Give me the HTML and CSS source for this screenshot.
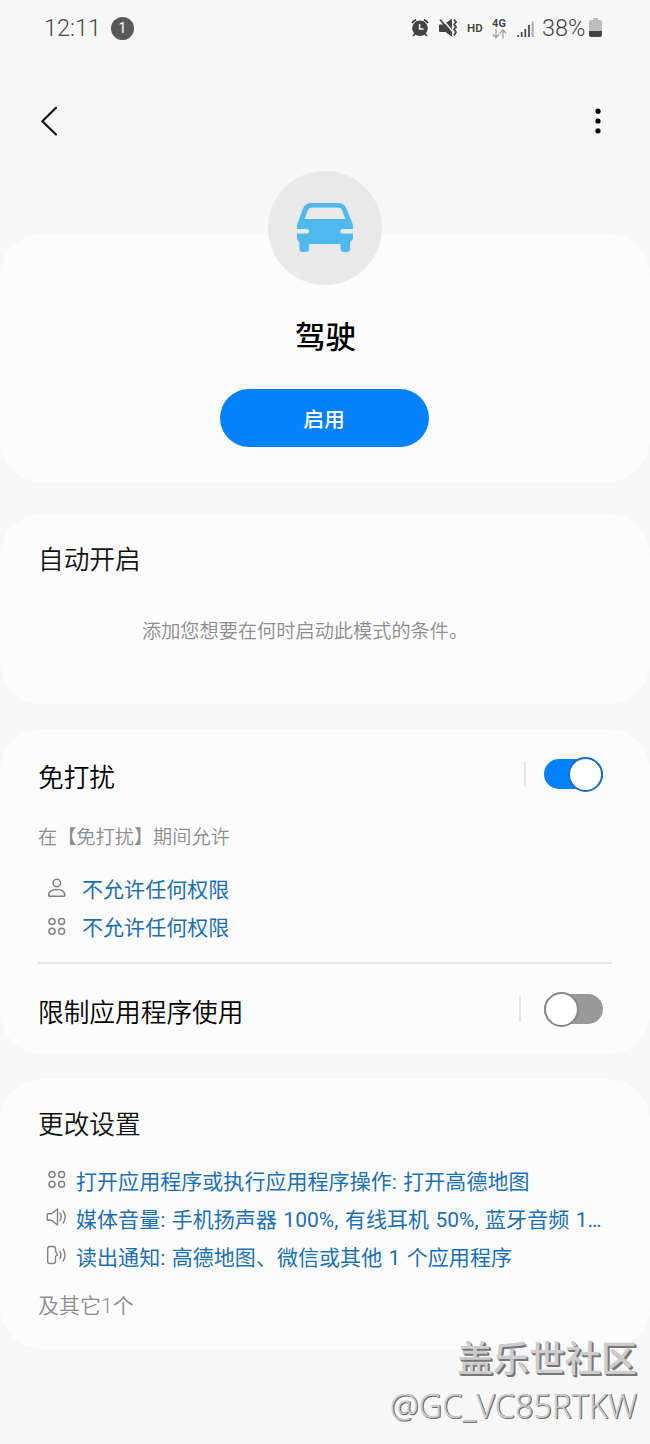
FILE: index.html
```
<!DOCTYPE html>
<html lang="zh-CN">

<head>
  <meta charset="UTF-8">
  <title>驾驶</title>
  <link rel="stylesheet" href="styles.css">
</head>

<body>
  <svg class="symbols" width="0" height="0">
    <symbol id="icon-apps" viewBox="0 0 20 20">
      <g fill="none" stroke="currentColor" stroke-width="1.5">
        <circle cx="5" cy="5.6" r="3" />
        <circle cx="14.6" cy="5.6" r="3" />
        <circle cx="5" cy="15.2" r="3" />
        <circle cx="14.6" cy="15.2" r="3" />
      </g>
    </symbol>
  </svg>

  <header class="status-bar">
    <span class="time">12:11</span>
    <span class="badge">1</span>
    <div class="status-icons">
      <svg class="alarm" width="18" height="20" viewBox="0 0 18 20">
        <circle cx="9" cy="10.2" r="7.8" fill="#444" />
        <path d="M.8 4.700 5 1.500M17.200 4.700 13 1.500M4.200 15.500 2.200 18M13.800 15.500 15.800 18" stroke="#444" stroke-width="2" fill="none" />
        <path d="M8.600 6v5h4" stroke="#f7f7f7" stroke-width="1.500" fill="none" />
      </svg>
      <svg class="mute" width="20" height="20" viewBox="0 0 20 20">
        <path d="M1.500 7h4l8-5.500v16.500L7.500 13.500h-6z" fill="#444" stroke="#444" stroke-linejoin="round" />
        <path d="M3.200 0 16 15" stroke="#f7f7f7" stroke-width="1.500" />
        <path d="M2 1.500 14 16" stroke="#444" stroke-width="1.700" />
        <path d="M16 1.500l2 2.500-2 2.500 2 2.500-2 2.500 2 2.500-2 3.500" stroke="#444" stroke-width="1.800" fill="none" />
      </svg>
      <span class="hd">HD</span>
      <div class="network">
        <span>4G</span>
        <svg width="15" height="10" viewBox="0 0 15 10">
          <path d="M4 0v8.500M.8 5.300 4 8.700l3.200-3.400M11 9.500V1M7.800 4.200 11 .8l3.200 3.400" stroke="#a2a2a2" stroke-width="1.300" fill="none" />
        </svg>
      </div>
      <svg class="signal" width="18" height="18" viewBox="0 0 18 18">
        <path d="M1.200 15v2M4.700 12v5M8.300 9v8M12 5v12" stroke="#444" stroke-width="1.700" />
        <path d="M15.600 1.500V17" stroke="#aaa" stroke-width="1.900" />
      </svg>
      <span class="percent">38%</span>
      <svg class="battery" width="13" height="20" viewBox="0 0 13 20">
        <path d="M4 0h5v2h2q2 0 2 2v9H0V4q0-2 2-2h2z" fill="#bebebe" />
        <path d="M0 13h13v4q0 2-2 2H2q-2 0-2-2z" fill="#444" />
      </svg>
    </div>
  </header>

  <nav class="toolbar">
    <svg width="20" height="32" viewBox="0 0 20 32">
      <path d="M17 2.800 3.300 16.300 17 29.500" fill="none" stroke="#111" stroke-width="2.200" stroke-linecap="round" stroke-linejoin="round" />
    </svg>
    <svg width="6" height="28" viewBox="0 0 6 28">
      <circle cx="3" cy="4.200" r="2.600" />
      <circle cx="3" cy="14" r="2.600" />
      <circle cx="3" cy="23.800" r="2.600" />
    </svg>
  </nav>

  <main>
    <section class="card mode">
      <div class="mode-icon">
        <svg width="58" height="50" viewBox="0 0 58 50">
          <path fill="#4fb8ee" fill-rule="evenodd" d="M15 0h27q6 0 8.500 5.500L57 22v4H46.500a2.300 2.300 0 0 0 0 4.600H57v4q0 3-3 5v6.400q0 3-3 3h-3.500q-3 0-3-3V41H13v5q0 3-3 3H6.500q-3 0-3-3v-6.400Q1 37 1 34.600v-4h9.800a2.300 2.300 0 0 0 0-4.600H1v-4L7 5.500Q9.500 0 15 0zM16.500 4.500Q13 4.500 12 7L8.500 16h41L46 7q-1-2.500-4.500-2.500z" />
        </svg>
      </div>
      <h1>驾驶</h1>
      <button class="enable">启用</button>
    </section>

    <section class="card auto">
      <h2>自动开启</h2>
      <p>添加您想要在何时启动此模式的条件。</p>
    </section>

    <section class="card dnd">
      <div class="switch-row">
        <h2>免打扰</h2>
        <span class="switch on"></span>
      </div>
      <p class="note">在【免打扰】期间允许</p>
      <ul class="list allowed">
        <li>
          <svg width="20" height="20" viewBox="0 0 20 20">
            <g fill="none" stroke="currentColor" stroke-width="1.500">
              <circle cx="9.800" cy="5" r="3.700" />
              <path d="M2.300 18.300q-.5 0-.5-.7c0-4 3.500-6 8-6s8 2 8 6q0 .7-.5.700z" />
            </g>
          </svg>
          <span>不允许任何权限</span>
        </li>
        <li>
          <svg width="20" height="20"><use href="#icon-apps" /></svg>
          <span>不允许任何权限</span>
        </li>
      </ul>
      <div class="switch-row limit">
        <h2>限制应用程序使用</h2>
        <span class="switch"></span>
      </div>
    </section>

    <section class="card settings">
      <h2>更改设置</h2>
      <ul class="list">
        <li>
          <svg width="20" height="20"><use href="#icon-apps" /></svg>
          <span>打开应用程序或执行应用程序操作: 打开高德地图</span>
        </li>
        <li>
          <svg width="22" height="20" viewBox="0 0 22 20">
            <path d="M2 6.800h3.500L11.500 2v16L5.500 13.300H2q-.8 0-.8-.8V7.600q0-.8.8-.8zM14 6.200q2.200 3.800 0 7.600M17.200 4q4 6 0 12" fill="none" stroke="currentColor" stroke-width="1.400" stroke-linejoin="round" stroke-linecap="round" />
          </svg>
          <span>媒体音量: 手机扬声器 100%, 有线耳机 50%, 蓝牙音频 1…</span>
        </li>
        <li>
          <svg width="22" height="20" viewBox="0 0 22 20">
            <path d="M9.500 5V3.800Q9.500 1.500 7 1.500H4Q1.700 1.500 1.700 3.800v12.400q0 2.300 2.300 2.300h3q2.500 0 2.500-2.300v-4.700l2-1.500-2-4zM14 6.500q1.800 3.500 0 7M17.200 4q3.500 6 0 12" fill="none" stroke="currentColor" stroke-width="1.400" stroke-linejoin="round" stroke-linecap="round" />
          </svg>
          <span>读出通知: 高德地图、微信或其他 1 个应用程序</span>
        </li>
      </ul>
      <p class="more">及其它1个</p>
    </section>
  </main>

  <div class="watermark">
    <div class="community">盖乐世社区</div>
    <div class="user">@GC_VC85RTKW</div>
  </div>
</body>

</html>
```
FILE: styles.css
```
*,
*::before,
*::after {
  box-sizing: border-box;
}

body {
  position: relative;
  width: 650px;
  height: 1444px;
  margin: 0;
  overflow: hidden;
  background: #f7f7f7;
  color: #111;
  font-family: Roboto, "Noto Sans CJK SC", sans-serif;
}

h1,
h2,
p,
ul {
  margin: 0;
  padding: 0;
}

.symbols {
  display: none;
}

/* Status bar */
.status-bar {
  display: flex;
  align-items: center;
  height: 56px;
  padding: 0 48px 0 44px;
  color: #444;
}

.time {
  font-size: 23.5px;
  font-weight: 350;
  width: 67px;
}

.badge {
  width: 23px;
  height: 23px;
  border-radius: 50%;
  background: #595959;
  color: #fff;
  font-size: 14px;
  line-height: 23px;
  text-align: center;
}

.status-icons {
  display: flex;
  align-items: center;
  margin-left: auto;
}

.mute {
  margin-left: 9px;
}

.hd {
  width: 17px;
  margin-left: 9px;
  font-size: 11.5px;
  font-weight: 600;
}

.network {
  display: flex;
  flex-direction: column;
  align-items: center;
  width: 16px;
  margin-left: 7px;
  font-size: 11px;
  font-weight: 700;
  line-height: 11px;
}

.signal {
  margin: 2px 0 0 10px;
}

.percent {
  width: 45px;
  margin-left: 7px;
  font-size: 23.5px;
  font-weight: 350;
}

.battery {
  margin-left: 2px;
}

.toolbar {
  display: flex;
  align-items: center;
  justify-content: space-between;
  height: 130px;
  padding: 0 49px 0 39px;
}

/* Cards */
main {
  display: flex;
  flex-direction: column;
  margin-top: 48px;
}

.card {
  padding: 0 38px;
  border-radius: 42px;
  background: #fcfcfc;
}

h2 {
  font-size: 25.7px;
  font-weight: 350;
  line-height: 36px;
}

.mode {
  display: flex;
  flex-direction: column;
  align-items: center;
  height: 248px;
}

.mode-icon {
  display: flex;
  align-items: center;
  justify-content: center;
  width: 114px;
  height: 114px;
  margin-top: -63px;
  border-radius: 50%;
  background: #e9e9e9;
}

h1 {
  margin: 32px 0 0 1px;
  font-size: 30.5px;
  font-weight: 500;
  line-height: 42px;
  color: #000;
}

.enable {
  width: 209px;
  height: 58px;
  margin: 30px 2px 0 0;
  padding: 5px 0 0;
  border: 0;
  border-radius: 29px;
  background: #0381fe;
  color: #fff;
  font: 500 20.8px/53px Roboto, "Noto Sans CJK SC", sans-serif;
}

.auto {
  height: 190px;
  margin-top: 32px;
  padding-top: 28px;
}

.auto p {
  margin: 40px 0 0 104px;
  color: #8c8c8c;
  font-size: 19.2px;
  font-weight: 350;
  line-height: 28px;
}

.dnd {
  height: 325px;
  margin-top: 25px;
  padding-top: 27px;
}

.switch-row {
  display: flex;
  align-items: center;
  justify-content: space-between;
  height: 36px;
  padding-right: 9px;
}

.switch-row h2 {
  padding-top: 7px;
  color: #000;
}

.switch {
  display: flex;
  align-items: center;
  width: 59px;
  height: 30px;
  border-radius: 15px;
  background: #999;
}

.switch::after {
  content: "";
  flex: none;
  width: 35px;
  height: 35px;
  border: 2px solid #868686;
  border-radius: 50%;
  background: #fff;
}

/* thin divider left of the switch */
.switch::before {
  content: "";
  flex: none;
  width: 2px;
  height: 26px;
  margin: 0 23px 0 -25px;
  background: #e6e6e6;
}

.switch.on {
  background: #0381fe;
}

.switch.on::before {
  margin: 0 42px 0 -20px;
}

.switch.on::after {
  border-color: #1670c0;
}

.note {
  margin-top: 32px;
  color: #8c8c8c;
  font-size: 19.2px;
  font-weight: 350;
  line-height: 28px;
}

.list {
  list-style: none;
  font-size: 21px;
  letter-spacing: 0.05px;
  word-spacing: 1.1px;
  color: #1a70b5;
}

.list li {
  display: flex;
  align-items: center;
  height: 38px;
  padding-left: 8px;
}

.list svg {
  flex: none;
  width: 22px;
  margin: -4px 8px 0 0;
  color: #808080;
}

.list span {
  padding-top: 2px;
  white-space: nowrap;
  line-height: 36px;
}

.allowed {
  height: 112px;
  padding-top: 18px;
  border-bottom: 2px solid #e5e5e5;
}

.allowed svg {
  margin: -2px 14px 0 0;
}

.limit {
  margin-top: 27px;
}

.settings {
  height: 270px;
  margin-top: 25px;
  padding-top: 28px;
}

.settings .list {
  margin-top: 19px;
}

.more {
  margin-top: 16px;
  color: #8c8c8c;
  font-size: 21px;
  font-weight: 350;
  line-height: 28px;
}

/* Forum watermark laid over the page */
.watermark {
  position: absolute;
  right: 13px;
  bottom: 16px;
  color: #cdcdcd;
  text-align: right;
  white-space: nowrap;
}

.community {
  font-size: 36px;
  font-weight: 500;
  line-height: 48px;
  text-shadow: 1px 1px 0 #777, 2px 2px 0 #777;
}

.user {
  font-family: "Noto Sans", sans-serif;
  font-size: 32.5px;
  font-weight: 300;
  line-height: 44px;
  text-shadow: 1px 1px 0 #6c6c6c, 1px 0 0 #777;
}
```
